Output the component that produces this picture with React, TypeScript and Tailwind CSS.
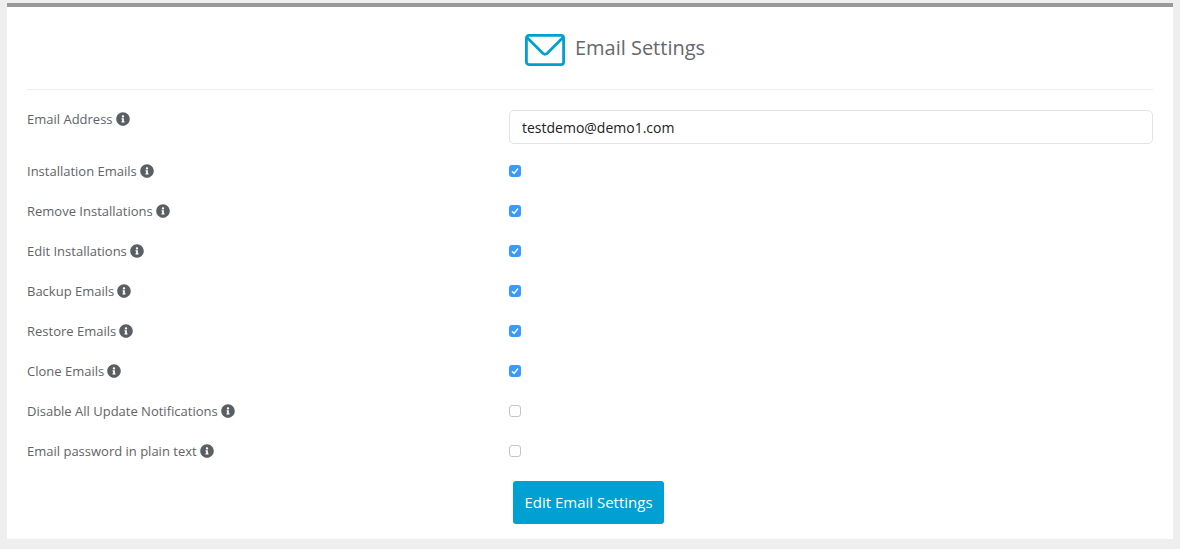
import { FaInfoCircle } from 'react-icons/fa';

const settings = [
  { label: 'Installation Emails', checked: true },
  { label: 'Remove Installations', checked: true },
  { label: 'Edit Installations', checked: true },
  { label: 'Backup Emails', checked: true },
  { label: 'Restore Emails', checked: true },
  { label: 'Clone Emails', checked: true },
  { label: 'Disable All Update Notifications', checked: false },
  { label: 'Email password in plain text', checked: false },
];

function Label({ text }: { text: string }) {
  return (
    <div className="flex items-center gap-[3px] text-[13px] leading-[18px] text-[#5f6468]">
      <span>{text}</span>
      <FaInfoCircle className="h-[14px] w-[14px] text-[#5a5f64]" />
    </div>
  );
}

function Checkbox({ checked }: { checked: boolean }) {
  if (!checked) {
    return <div className="h-3 w-3 rounded-[3px] border border-[#c4c4c4] bg-white" />;
  }
  return (
    <div className="flex h-3 w-3 items-center justify-center rounded-[3px] bg-[#3b99fc]">
      <svg viewBox="0 0 12 12" className="h-3 w-3" fill="none" stroke="#fff" strokeWidth="1.3">
        <path d="M3 6.2 5.1 8.5 9 3.5" />
      </svg>
    </div>
  );
}

export default function App() {
  return (
    <div className="h-[549px] overflow-hidden bg-[#eeeeee] px-[7px] pt-[3px] font-['Open_Sans',sans-serif]">
      <div className="h-[536px] border-t-4 border-[#999999] bg-white px-5">
        <div className="flex h-[83px] items-center justify-center gap-[10px] border-b border-[#eeeeee] pl-[50px]">
          <svg viewBox="0 0 40 32" className="mt-[4px] h-[32px] w-[40px]" fill="none" stroke="#00a0d2" strokeWidth="2.8">
            <rect x="1.4" y="1.4" width="37.2" height="29.2" rx="2.5" />
            <path d="M2 3.5 18 19.5q2 1.6 4 0L38 3.5" />
          </svg>
          <h1 className="text-[20px] leading-7 text-[#63686e]">Email Settings</h1>
        </div>

        <div className="mt-5 grid grid-cols-[482px_1fr]">
          <div>
            <Label text="Email Address" />
          </div>
          <input
            readOnly
            value="testdemo@demo1.com"
            className="h-[34px] w-full rounded-[5px] border border-[#e3e3e3] px-3 text-[14px] text-[#222222] outline-none"
          />
        </div>

        <div className="mt-[7px]">
          {settings.map((item) => (
            <div key={item.label} className="grid h-10 grid-cols-[482px_1fr] items-center">
              <Label text={item.label} />
              <Checkbox checked={item.checked} />
            </div>
          ))}
        </div>

        <div className="mt-[10px] pl-[486px]">
          <button className="h-[43px] w-[151px] rounded-[3px] bg-[#00a0d2] text-[15px] text-white">
            Edit Email Settings
          </button>
        </div>
      </div>
    </div>
  );
}
